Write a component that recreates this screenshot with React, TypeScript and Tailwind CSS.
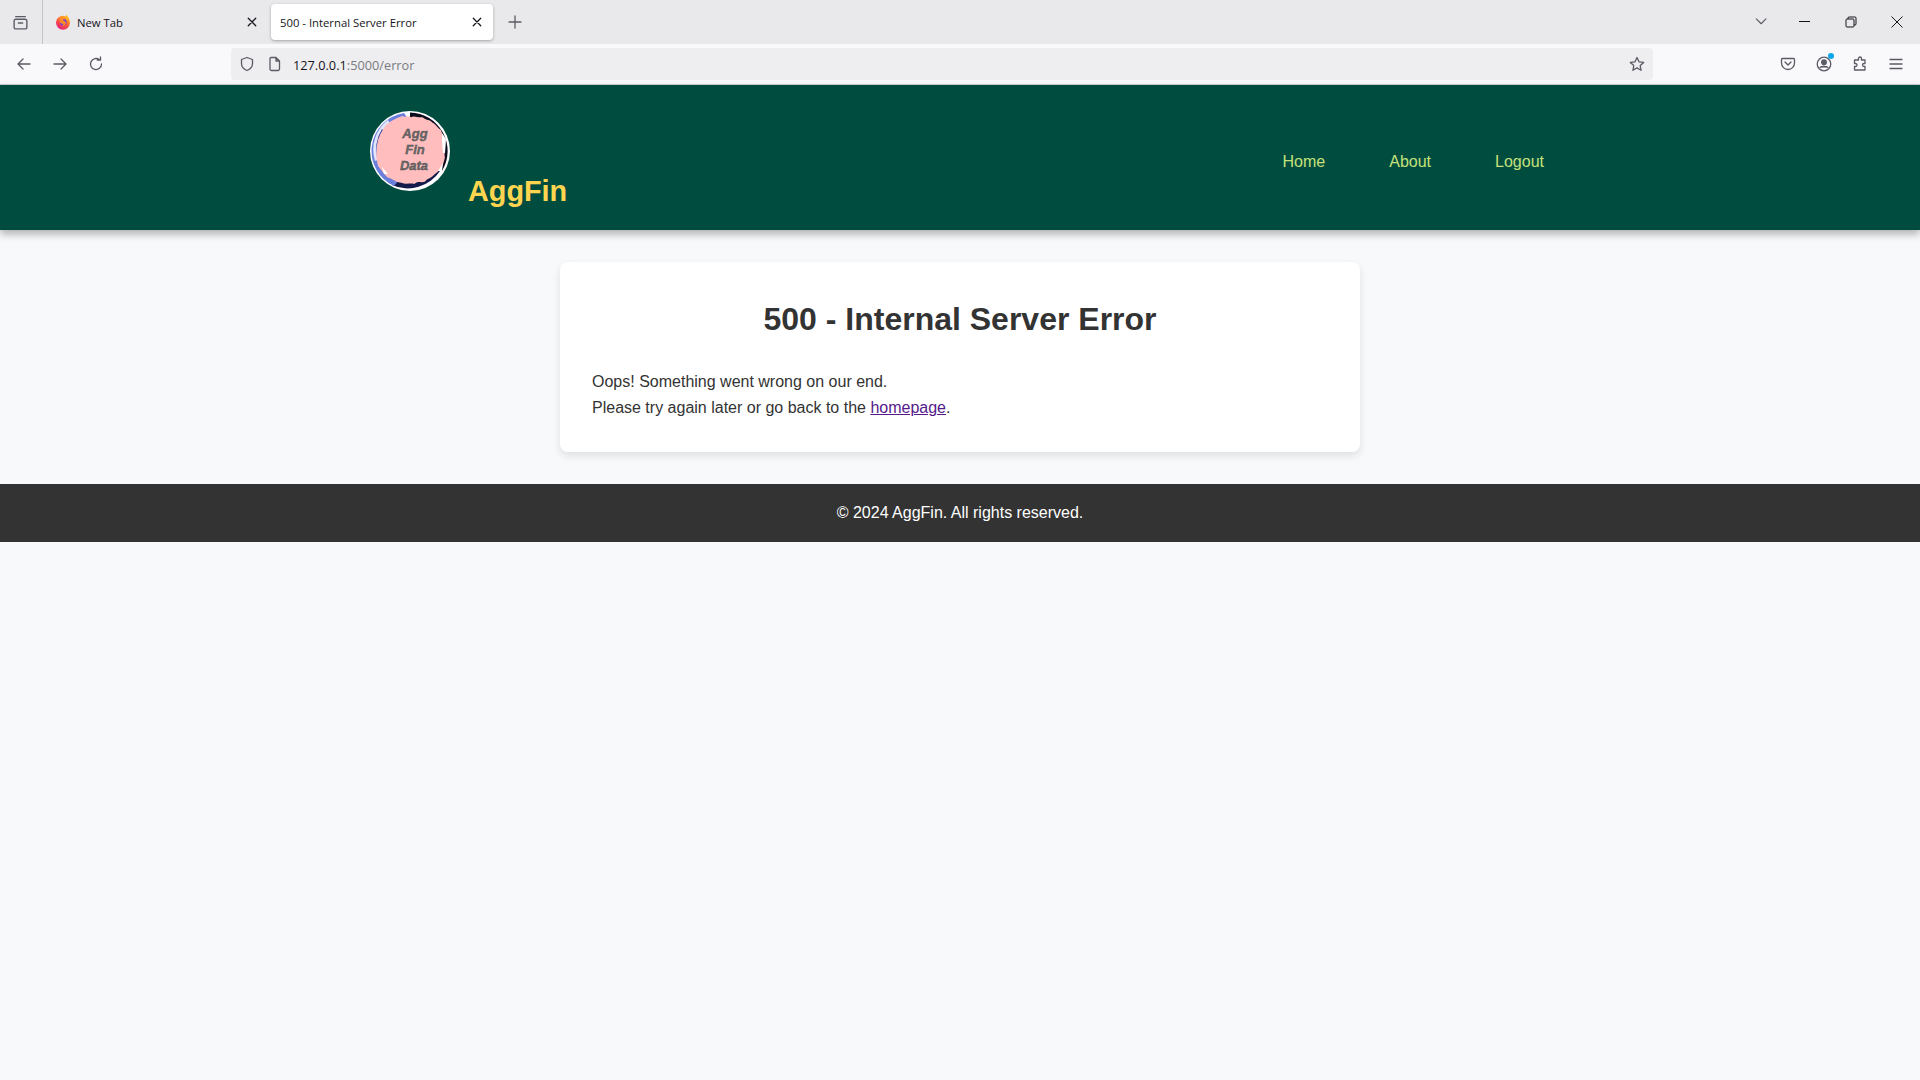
import React from "react";

const I = ({ children, s = 16, c = "#5b5b66", w = 1.3 }: { children: React.ReactNode; s?: number; c?: string; w?: number }) => (
  <svg width={s} height={s} viewBox="0 0 16 16" fill="none" stroke={c} strokeWidth={w} strokeLinecap="round" strokeLinejoin="round" className="shrink-0">
    {children}
  </svg>
);

const Fx = () => (
  <svg width="16" height="16" viewBox="0 0 16 16" className="shrink-0">
    <defs>
      <linearGradient id="fx" x1="0.8" y1="0" x2="0.2" y2="1">
        <stop offset="0" stopColor="#ffc31f" />
        <stop offset="0.5" stopColor="#ff5a36" />
        <stop offset="1" stopColor="#e31587" />
      </linearGradient>
    </defs>
    <circle cx="8" cy="8.800" r="7" fill="url(#fx)" />
    <path d="M11 0.500C12.500 2 14 4 14.600 6.500L11 5Z" fill="#ffb01f" />
    <circle cx="8.200" cy="8.200" r="3.400" fill="#7a3fd0" />
    <path d="M4.500 4C6.500 3 9.500 3.500 10.500 5.500C9 5 8 5.600 8 6.500C9.500 6.800 11 7.800 10.800 9.600C10.500 11.500 8.500 12.300 6.800 11.800C8 11.500 8.600 10.500 8 9.800C6.500 9.800 5 9 4.500 7Z" fill="#ff8a2a" />
  </svg>
);

const logoText = { textAnchor: "middle" as const, fontFamily: "'Liberation Sans', sans-serif", fontSize: 13, fontWeight: 700, fontStyle: "italic", fill: "#6b6b6b", stroke: "#4a4a4a", strokeWidth: 0.35 };

const Logo = () => (
  <svg width="80" height="80" viewBox="0 0 80 80" className="shrink-0 block">
    <circle cx="40" cy="40" r="40" fill="#ffffff" />
    <path d="M40 1.500A38.500 38.500 0 0 1 72 60L66 56A32 32 0 0 0 40 8Z" fill="#0b0b1e" />
    <path d="M70 60A38.500 38.500 0 0 1 22 74L26 68A32 32 0 0 0 66 56Z" fill="#141a4a" />
    <path d="M34 2A38.500 38.500 0 0 0 24 75L30 68A32 32 0 0 1 38 8Z" fill="#6a7fdc" />
    <path d="M18 9A37 37 0 0 0 5 50L7.500 49A34 34 0 0 1 20 12Z" fill="#dfe5fb" />
    <path d="M12 18A35 35 0 0 0 8.500 48L10 47.500A33 33 0 0 1 14 20Z" fill="#2f3c9c" />
    <path transform="translate(41 39) scale(1.06) translate(-41 -39)" d="M33 7C36 9 38 6 41 8C44 6 48 9 52 8C55 11 59 10 61 13C65 15 66 18 69 20C71 24 70 26 73 30C74 36 72 42 73 46C72 50 71 54 69 57C67 59 65 61 63 62C60 66 57 65 54 69C50 70 48 68 44 71C40 70 36 72 32 70C27 70 24 66 19 65C15 61 13 58 10 54C8 48 8 40 9 34C10 27 13 21 18 15C22 11 28 9 33 7Z" fill="#ffbdbd" />
    <path d="M72 22L76 28L75 42L73 42L72 30Z M68 60L73 52L72 60Z M12 56L18 63L14 63Z" fill="#ffffff" />
    <text x="45" y="27" {...logoText}>Agg</text>
    <text x="45" y="43" {...logoText}>Fin</text>
    <text x="44" y="59" {...logoText}>Data</text>
  </svg>
);

export default function App() {
  return (
    <div className="min-h-[1080px] bg-[#f8f9fa] font-['Liberation_Sans',Arial,sans-serif] text-[16px] text-[#333333]">
      {/* tab strip */}
      <div className="h-[44px] bg-[#e9e9ec] flex font-['Open_Sans',sans-serif] text-[11.300px] text-[#15141a]">
        <div className="w-[43px] h-full border-r border-[#c5c5c9] flex items-center justify-center pr-[2px]">
          <I s={17}>
            <path d="M3.500 2.500h9M2 6.500A1.500 1.500 0 0 1 3.500 5h9A1.500 1.500 0 0 1 14 6.500v6a1.500 1.500 0 0 1-1.500 1.500h-9A1.500 1.500 0 0 1 2 12.500zM6 8.500h4" />
          </I>
        </div>
        <div className="w-[228px] h-full flex items-center pl-[12px] pr-[13px]">
          <Fx />
          <span className="ml-[6px] flex-1 pt-[2px]">New Tab</span>
          <I s={12} c="#15141a" w={1.7}><path d="M3 3l10 10M13 3L3 13" /></I>
        </div>
        <div className="w-[222px] h-[36px] mt-[4px] bg-white rounded-[4px] shadow-[0_1px_3px_rgba(0,0,0,0.3)] flex items-center pl-[9px] pr-[10px]">
          <span className="flex-1 pt-[2px]">500 - Internal Server Error</span>
          <I s={12} c="#15141a" w={1.7}><path d="M3 3l10 10M13 3L3 13" /></I>
        </div>
        <div className="ml-[14px] flex items-center">
          <I s={16}><path d="M8 2v12M2 8h12" /></I>
        </div>
        <div className="flex-1" />
        <div className="flex items-center pr-[17px] -mt-[1px]">
          <I s={14}><path d="M1.500 4.500L7 10l5.500-5.500" /></I>
          <div className="w-[29px]" />
          <svg width="13" height="13" viewBox="0 0 13 13" fill="none" stroke="#15141a" className="shrink-0"><path d="M1 6.500h11" /></svg>
          <div className="w-[34px]" />
          <svg width="12" height="12" viewBox="0 0 12 12" fill="none" stroke="#15141a" className="shrink-0"><rect x="1" y="3" width="8" height="8" rx="1" /><path d="M3 3V2a1 1 0 0 1 1-1h6a1 1 0 0 1 1 1v6a1 1 0 0 1-1 1H9" /></svg>
          <div className="w-[34px]" />
          <svg width="12" height="12" viewBox="0 0 12 12" fill="none" stroke="#15141a" className="shrink-0"><path d="M.500 .500l11 11M11.500 .500l-11 11" /></svg>
        </div>
      </div>
      {/* toolbar */}
      <div className="h-[40px] bg-[#f9f9fb] border-b border-[#d0d0d4] box-content flex items-center font-['Open_Sans',sans-serif] pl-[16px] pr-[16px]">
        <I><path d="M14 8H2.500M7 3L2 8l5 5" /></I>
        <div className="w-[20px]" />
        <I><path d="M2 8h11.500M9 3l5 5-5 5" /></I>
        <div className="w-[20px]" />
        <I><path d="M13.500 8a5.500 5.500 0 1 1-2-4.200M12.500 1v3.200H9.300" /></I>
        <div className="ml-[127px] w-[1422px] h-[32px] bg-[#eeeef0] rounded-[4px] flex items-center pl-[8px] pr-[8px]">
          <I><path d="M8 1.500L2.500 3.500v4c0 3.500 2.500 5.800 5.500 7 3-1.200 5.500-3.500 5.500-7v-4z" /></I>
          <div className="w-[12px] shrink-0" />
          <I><path d="M4 1.500h5l3.500 3.500v8a1.500 1.500 0 0 1-1.500 1.500H4.500A1.500 1.500 0 0 1 3 13V2.500a1 1 0 0 1 1-1zM9 1.500V5h3.500" /></I>
          <span className="ml-[10px] flex-1 pt-[3px] text-[12.750px] text-[#15141a]">127.0.0.1<span className="text-[#7a7a80]">:5000/error</span></span>
          <I><path d="M8 1.500l2 4.300 4.700.6-3.500 3.200.9 4.700L8 11.900l-4.100 2.400.9-4.700L1.300 6.400 6 5.800z" /></I>
        </div>
        <div className="flex-1" />
        <div className="flex items-center gap-[20px]">
          <I><path d="M2.500 2.500h11a1 1 0 0 1 1 1V7a6.500 6.500 0 0 1-13 0V3.500a1 1 0 0 1 1-1zM5 6l3 3 3-3" /></I>
          <div className="relative shrink-0 w-[16px] h-[16px]">
            <I><circle cx="8" cy="8" r="6.800" /><circle cx="8" cy="6.300" r="2.300" fill="#5b5b66" /><path d="M4 11.500c1-1.500 7-1.500 8 0" fill="#5b5b66" /></I>
            <span className="absolute -top-[3px] -right-[2px] w-[6px] h-[6px] rounded-full bg-[#0ea5e9]" />
          </div>
          <I><path d="M6.500 2.500a1.500 1.500 0 0 1 3 0V4H13v3.500h-1a1.500 1.500 0 0 0 0 3h1V14H2.500v-3.500h1a1.500 1.500 0 0 0 0-3h-1V4h4z" /></I>
          <I><path d="M2 3.500h12M2 8h12M2 12.500h12" /></I>
        </div>
      </div>
      {/* site header */}
      <header className="h-[145px] bg-[#004d40] shadow-[0_4px_8px_rgba(0,0,0,0.3)] relative">
        <div className="w-[1200px] mx-auto pl-[10px] pr-[16px] h-full flex justify-between">
          <div className="flex items-start pt-[26px]">
            <Logo />
            <span className="ml-[18px] mt-[62px] text-[28.800px] leading-[36px] font-bold text-[#ffd54f]">AggFin</span>
          </div>
          <nav className="flex gap-[64px] pt-[65px] text-[#c5e17a]">
            <a>Home</a>
            <a>About</a>
            <a>Logout</a>
          </nav>
        </div>
      </header>
      {/* card */}
      <main className="w-[800px] mx-auto mt-[32px] bg-white rounded-[8px] shadow-[0_4px_8px_rgba(0,0,0,0.1)] h-[190px] px-[32px] pt-[39px]">
        <h1 className="text-[32px] leading-[37px] font-bold text-center text-[#333333]">500 - Internal Server Error</h1>
        <p className="mt-[31px] leading-[26px]">Oops! Something went wrong on our end.<br />Please try again later or go back to the <a className="underline text-[#551a8b]">homepage</a>.</p>
      </main>
      <footer className="mt-[32px] h-[58px] bg-[#333333] text-white flex items-center justify-center">
        © 2024 AggFin. All rights reserved.
      </footer>
    </div>
  );
}
